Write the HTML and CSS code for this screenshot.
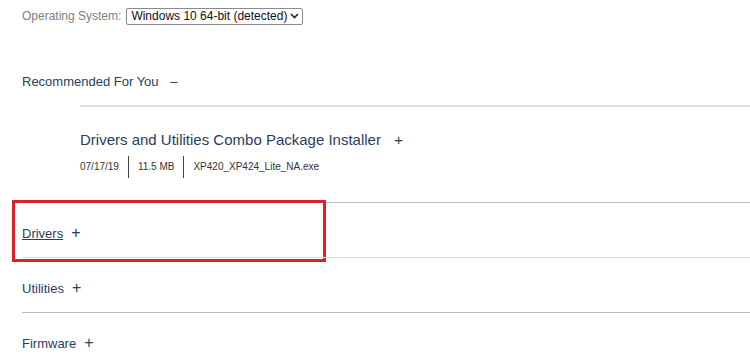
FILE: index.html
```html
<!DOCTYPE html>
<html lang="en">
<head>
    <meta charset="UTF-8">
    <meta name="viewport" content="width=device-width, initial-scale=1.0">
    <title>Drivers and Downloads</title>
    <link rel="stylesheet" href="styles.css">
</head>
<body>
    <div id="downloads">
        <div class="os-row">
            <label for="os-select">Operating System:</label>
            <div class="os-select">
                <span>Windows 10 64-bit (detected)</span>
                <svg width="9" height="6" viewBox="0 0 9 6"><path d="M1 1 L4.5 4.5 L8 1" fill="none" stroke="#222" stroke-width="1.6"/></svg>
            </div>
        </div>

        <div class="recommended">
            <div class="rec-head">Recommended For You <span class="toggle">&ndash;</span></div>
            <div class="rec-body">
                <div class="file-title">Drivers and Utilities Combo Package Installer <span class="toggle">+</span></div>
                <div class="file-meta">
                    <span>07/17/19</span>
                    <span>11.5 MB</span>
                    <span>XP420_XP424_Lite_NA.exe</span>
                </div>
            </div>
        </div>

        <div class="section">
            <a href="#" class="section-link">Drivers</a> <span class="toggle">+</span>
            <div class="highlight"></div>
        </div>
        <div class="section">Utilities <span class="toggle">+</span></div>
        <div class="section">Firmware <span class="toggle">+</span></div>
    </div>
</body>
</html>
```

FILE: styles.css
```css
body {
    font-family: "Liberation Sans", Arial, sans-serif;
    margin: 0;
    background-color: #fff;
    color: #2a3d5c;
}

#downloads {
    padding-left: 22px;
}

.os-row {
    display: flex;
    align-items: center;
    height: 32px;
    font-size: 12px;
}

.os-row label {
    color: #808080;
    margin-right: 5px;
}

.os-select {
    display: flex;
    align-items: center;
    gap: 3px;
    height: 15px;
    padding: 0 3px 0 4px;
    border: 1px solid #8a8a8a;
    border-radius: 2px;
    color: #111;
    font-size: 12px;
}

.recommended {
    padding-top: 40px;
}

.rec-head {
    font-size: 13px;
    line-height: 20px;
}

.rec-head .toggle {
    margin-left: 8px;
}

.rec-body {
    margin-top: 13px;
    margin-left: 58px;
    border-top: 2px solid #e0e0e0;
    padding-top: 23px;
    height: 72px;
}

.file-title {
    font-size: 15px;
    line-height: 20px;
}

.file-title .toggle {
    margin-left: 9px;
}

.file-meta {
    display: flex;
    margin-top: 6px;
    font-size: 10px;
    color: #333;
}

.file-meta span {
    line-height: 22px;
    padding: 0 9px;
    border-left: 1px solid #444;
}

.file-meta span:first-child {
    padding-left: 0;
    border-left: none;
}

.section {
    position: relative;
    display: flex;
    align-items: center;
    height: 48px;
    padding-top: 6px;
    border-top: 1px solid #bcbcbc;
    font-size: 13px;
}

.section:nth-child(4) {
    border-top-color: #dcdcdc;
}

.section .toggle {
    margin-left: 8px;
    font-size: 16px;
    line-height: 16px;
}

.section-link {
    color: #2a3d5c;
}

.highlight {
    position: absolute;
    left: -10px;
    top: -3px;
    width: 308px;
    height: 56px;
    border: 3px solid #d9222e;
}
```
